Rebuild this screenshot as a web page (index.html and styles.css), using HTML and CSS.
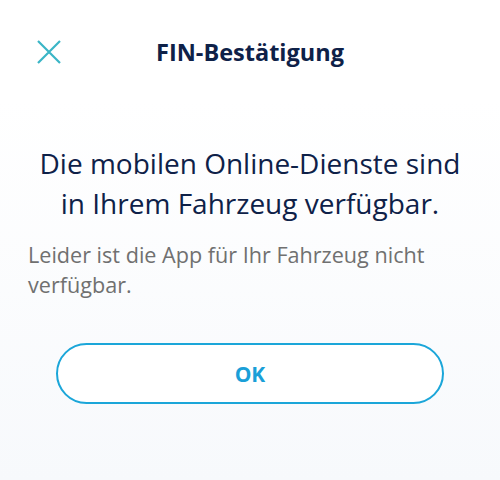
FILE: index.html
```html
<!DOCTYPE html>
<html lang="de">
<head>
  <meta charset="UTF-8">
  <meta name="viewport" content="width=device-width, initial-scale=1.0">
  <title>FIN-Bestätigung</title>

  <link rel="stylesheet" href="styles.css">
</head>
<body>

  <header class="top-bar">
    <button class="close-btn" aria-label="Schließen">
      <svg width="24" height="24" viewBox="0 0 24 24">
        <path d="M1 1 L23 23 M23 1 L1 23" stroke="#3ab5c6" stroke-width="2.2" fill="none"/>
      </svg>
    </button>
    <h1 class="title">FIN-Bestätigung</h1>
    <span></span>
  </header>

  <main class="content">
    <h2 class="headline">Die mobilen Online-Dienste sind in Ihrem Fahrzeug verfügbar.</h2>
    <p class="info">Leider ist die App für Ihr Fahrzeug nicht verfügbar.</p>
    <button class="ok-btn">OK</button>
  </main>

</body>
</html>
```
FILE: styles.css
```css
html, body {
  margin: 0;
  padding: 0;
  height: 100%;
}

body {
  font-family: "Open Sans", "Noto Sans", sans-serif;
  background: linear-gradient(#ffffff 0, #ffffff 100px, #f7f9fc 480px);
  color: #0e2148;
}

.top-bar {
  display: grid;
  grid-template-columns: 80px 1fr 80px;
  align-items: center;
  height: 104px;
}

.close-btn {
  background: none;
  border: none;
  padding: 0;
  margin-left: 37px;
  width: 24px;
  height: 24px;
  cursor: pointer;
}

.close-btn svg {
  display: block;
}

.title {
  margin: 0;
  text-align: center;
  font-size: 23.5px;
  font-weight: 700;
  color: #0e2148;
}

.content {
  display: flex;
  flex-direction: column;
  padding: 0 28px;
}

.headline {
  align-self: center;
  max-width: 432px;
  margin: 39px 0 0;
  text-align: center;
  font-size: 28px;
  font-weight: 400;
  line-height: 40px;
  color: #0e2148;
}

.info {
  margin: 17px 0 0;
  font-size: 21.6px;
  line-height: 30px;
  color: #707070;
}

.ok-btn {
  align-self: center;
  margin-top: 43px;
  width: 388px;
  height: 61px;
  border: 2.5px solid #1ba6d9;
  border-radius: 31px;
  background: #ffffff;
  color: #1a9fd8;
  font-family: inherit;
  font-size: 21px;
  font-weight: 700;
  cursor: pointer;
}
```
